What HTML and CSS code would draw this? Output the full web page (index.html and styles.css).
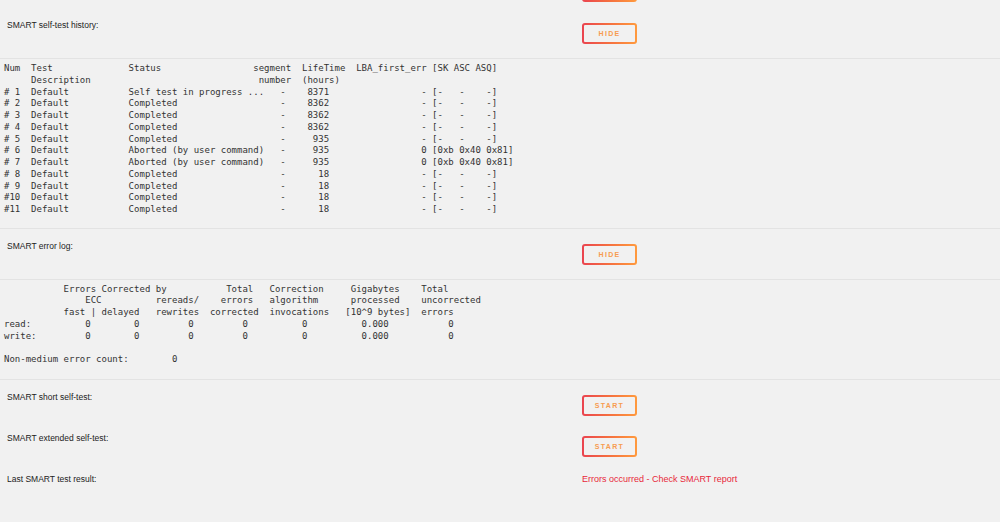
FILE: index.html
```html
<!DOCTYPE html>
<html lang="en">
<head>
<meta charset="utf-8">
<title>Disk SMART</title>
<link rel="stylesheet" href="styles.css">
</head>
<body>
<div class="lead">
  <span></span>
  <button class="btn" type="button" aria-label="Hide"></button>
</div>

<section class="panel">
  <div class="row">
    <span class="label">SMART self-test history:</span>
    <button class="btn" type="button">HIDE</button>
  </div>
  <pre class="output history">Num  Test              Status                 segment  LifeTime  LBA_first_err [SK ASC ASQ]
     Description                               number  (hours)
# 1  Default           Self test in progress ...   -    8371                 - [-   -    -]
# 2  Default           Completed                   -    8362                 - [-   -    -]
# 3  Default           Completed                   -    8362                 - [-   -    -]
# 4  Default           Completed                   -    8362                 - [-   -    -]
# 5  Default           Completed                   -     935                 - [-   -    -]
# 6  Default           Aborted (by user command)   -     935                 0 [0xb 0x40 0x81]
# 7  Default           Aborted (by user command)   -     935                 0 [0xb 0x40 0x81]
# 8  Default           Completed                   -      18                 - [-   -    -]
# 9  Default           Completed                   -      18                 - [-   -    -]
#10  Default           Completed                   -      18                 - [-   -    -]
#11  Default           Completed                   -      18                 - [-   -    -]</pre>
</section>

<section class="panel">
  <div class="row">
    <span class="label">SMART error log:</span>
    <button class="btn" type="button">HIDE</button>
  </div>
  <pre class="output errors">           Errors Corrected by           Total   Correction     Gigabytes    Total
               ECC          rereads/    errors   algorithm      processed    uncorrected
           fast | delayed   rewrites  corrected  invocations   [10^9 bytes]  errors
read:          0        0         0         0          0          0.000           0
write:         0        0         0         0          0          0.000           0

Non-medium error count:        0</pre>
</section>

<section class="actions">
  <div class="row plain">
    <span class="label">SMART short self-test:</span>
    <button class="btn" type="button">START</button>
  </div>
  <div class="row plain">
    <span class="label">SMART extended self-test:</span>
    <button class="btn" type="button">START</button>
  </div>
  <div class="row plain result">
    <span class="label">Last SMART test result:</span>
    <span class="status-error">Errors occurred - Check SMART report</span>
  </div>
</section>
</body>
</html>
```

FILE: styles.css
```css
* {
  box-sizing: border-box;
}

html,
body {
  margin: 0;
  padding: 0;
  background: #f1f1f1;
}

body {
  width: 1000px;
  height: 522px;
  overflow: hidden;
  font-family: "Liberation Sans", Arial, sans-serif;
  color: #2b2b2b;
}

/* label column + control column */
.row,
.lead {
  display: grid;
  grid-template-columns: 575px auto;
  align-items: start;
  padding-left: 7px;
}

.lead {
  height: 8px;
}

.lead .btn {
  margin-top: -19px;
}

.row {
  padding-top: 15px;
  padding-bottom: 14px;
  border-bottom: 1px solid #e3e3e3;
}

.label {
  font-size: 8.5px;
  line-height: 12px;
  margin-top: -4px;
  color: #222;
}

.btn {
  width: 55px;
  height: 21px;
  padding: 0;
  margin: 0;
  border: 2px solid transparent;
  border-radius: 3px;
  background:
    linear-gradient(#f1f1f1, #f1f1f1) padding-box,
    linear-gradient(90deg, #ea4450 0%, #f5703f 50%, #ff9a3e 100%) border-box;
  color: #f79c4f;
  font-family: "Liberation Sans", Arial, sans-serif;
  font-size: 7px;
  font-weight: bold;
  letter-spacing: 1.3px;
  line-height: 17px;
  text-align: center;
  cursor: pointer;
}

.output {
  margin: 0;
  padding: 3px 0 14px 4px;
  border-bottom: 1px solid #e3e3e3;
  font-family: "DejaVu Sans Mono", "Liberation Mono", monospace;
  font-size: 9px;
  line-height: 11.7px;
  color: #333;
}

.output.history {
  padding-top: 4px;
  padding-bottom: 12px;
  line-height: 11.75px;
}

.output.errors {
  padding-top: 4px;
  padding-bottom: 13px;
}

.actions .row.plain {
  border-bottom: none;
  padding-bottom: 0;
}

.actions .row.plain + .row.plain {
  padding-top: 20px;
}

.actions .row.result {
  padding-top: 24px;
}

.status-error {
  font-size: 9px;
  line-height: 12px;
  margin-top: -4px;
  color: #e8283a;
}
```
